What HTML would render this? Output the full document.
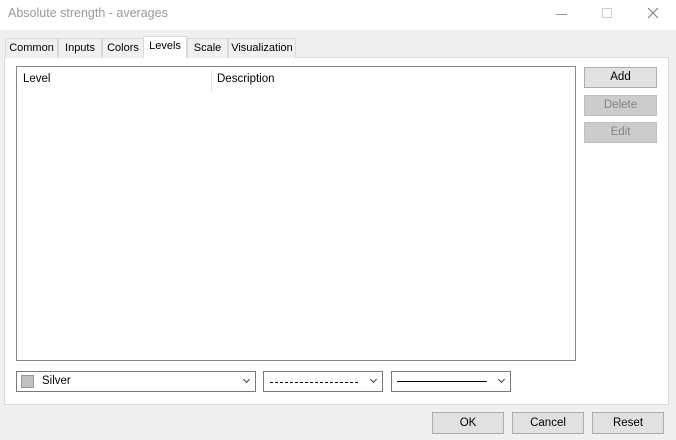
<!DOCTYPE html>
<html><head><style>
*{box-sizing:border-box;margin:0;padding:0}
body{width:676px;height:440px;background:#f0f0f0;font-family:"Liberation Sans",sans-serif;font-size:11.5px;color:#000;position:relative;overflow:hidden}
.a{position:absolute}
.tab{position:absolute;top:38px;height:20px;border:1px solid #d9d9d9;border-bottom:none;background:#f0f0f0;text-align:center;line-height:18px;font-size:11px}
.btn{position:absolute;border:1px solid #adadad;background:#e1e1e1;text-align:center;line-height:18px}
.dis{background:#cccccc;border-color:#bfbfbf;color:#838383}
.cb{position:absolute;top:371px;height:21px;border:1px solid #7a7a7a;background:#fff}
.ar{position:absolute;right:6px;top:5px;width:5px;height:5px;border-right:1px solid #444;border-bottom:1px solid #444;transform:rotate(45deg)}
</style></head><body>
<div class="a" style="left:0;top:0;width:676px;height:30px;background:#fff"></div>
<div class="a" style="left:8px;top:6px;font-size:12.5px;color:#999">Absolute strength - averages</div>
<div class="a" style="left:556px;top:14px;width:11px;height:1px;background:#999"></div>
<div class="a" style="left:602px;top:8px;width:10px;height:10px;border:1px solid #ccc"></div>
<svg class="a" style="left:647px;top:7px" width="12" height="12"><path d="M1 1L11 11M11 1L1 11" stroke="#777" stroke-width="1"/></svg>
<div class="a" style="left:4px;top:57px;width:665px;height:348px;background:#fff;border:1px solid #d9d9d9"></div>
<div class="tab" style="left:5px;width:53px">Common</div>
<div class="tab" style="left:58px;width:44px">Inputs</div>
<div class="tab" style="left:102px;width:42px">Colors</div>
<div class="tab" style="left:143px;top:36px;height:22px;width:44px;background:#fff;z-index:2">Levels</div>
<div class="tab" style="left:187px;width:41px">Scale</div>
<div class="tab" style="left:228px;width:68px">Visualization</div>
<div class="a" style="left:16px;top:66px;width:560px;height:295px;border:1px solid #828790;background:#fff"></div>
<div class="a" style="left:23px;top:73px">Level</div>
<div class="a" style="left:211px;top:70px;width:1px;height:22px;background:#e5e5e5"></div>
<div class="a" style="left:217px;top:73px">Description</div>
<div class="btn" style="left:584px;top:67px;width:73px;height:21px">Add</div>
<div class="btn dis" style="left:584px;top:95px;width:73px;height:21px">Delete</div>
<div class="btn dis" style="left:584px;top:122px;width:73px;height:21px">Edit</div>
<div class="cb" style="left:16px;width:240px"><div class="a" style="left:4px;top:3px;width:13px;height:13px;background:#c0c0c0;border:1px solid #999"></div><div class="a" style="left:25px;top:3px">Silver</div><div class="ar"></div></div>
<div class="cb" style="left:263px;width:120px"><div class="a" style="left:6px;top:10px;width:88px;border-top:1px dashed #000"></div><div class="ar"></div></div>
<div class="cb" style="left:391px;width:120px"><div class="a" style="left:5px;top:9px;width:90px;height:1px;background:#000"></div><div class="ar"></div></div>
<div class="btn" style="left:432px;top:412px;width:72px;height:22px;line-height:20px">OK</div>
<div class="btn" style="left:512px;top:412px;width:72px;height:22px;line-height:20px">Cancel</div>
<div class="btn" style="left:592px;top:412px;width:72px;height:22px;line-height:20px">Reset</div>
</body></html>
